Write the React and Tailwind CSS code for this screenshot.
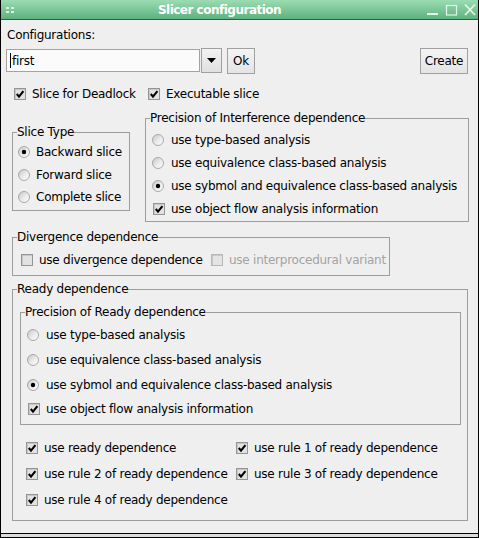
import React from "react";

const Check = ({ checked = true, disabled = false }) => (
  <span
    className={`inline-flex shrink-0 w-[12px] h-[12px] border ${
      disabled ? "border-[#b8b8b8] bg-[#e4e4e4]" : "border-[#959595] bg-[#e2e2e2]"
    } shadow-[inset_1px_1px_0_#c8c8c8]`}
  >
    {checked && (
      <svg viewBox="0 0 10 10" className="w-[10px] h-[10px]">
        <path d="M1.8 5 L4 7.6 L8.4 2.2" stroke="#000" strokeWidth="2.1" fill="none" />
      </svg>
    )}
  </span>
);

const Radio = ({ checked = false }) => (
  <svg viewBox="0 0 12 12" className="w-[12px] h-[12px] shrink-0">
    <defs>
      <linearGradient id="rg" x1="0" y1="0" x2="1" y2="1">
        <stop offset="0" stopColor="#c4c4c4" />
        <stop offset="0.55" stopColor="#ececec" />
        <stop offset="1" stopColor="#ffffff" />
      </linearGradient>
    </defs>
    <circle cx="6" cy="6" r="5.5" fill="url(#rg)" stroke="#a8a8a8" strokeWidth="1" />
    {checked && <circle cx="6" cy="6" r="2.2" fill="#000" />}
  </svg>
);

const RadioRow = ({ checked, children, h = "h-[23px]", gap = "gap-[7px]" }) => (
  <div className={`flex items-center ${h} ${gap}`}>
    <Radio checked={checked} />
    <span>{children}</span>
  </div>
);

const CheckRow = ({ children, h = "h-[23px]", gap = "gap-[6px]", disabled, checked = true, cls = "" }) => (
  <div className={`flex items-center ${h} ${gap} ${cls}`}>
    <Check checked={checked} disabled={disabled} />
    <span className={disabled ? "text-[#a3a3a3]" : ""}>{children}</span>
  </div>
);

const Legend = ({ children }) => (
  <legend className="ml-[4px] px-0 h-[14px] leading-[14px]">{children}</legend>
);

export default function App() {
  return (
    <div className="w-[479px] h-[538px] flex flex-col bg-[#efefef] border-x border-black text-black text-[12px] leading-[14px] tracking-[-0.25px] font-['DejaVu_Sans',sans-serif] overflow-hidden">
      {/* title bar */}
      <div className="h-[20px] shrink-0 flex items-stretch border-b border-[#2f5e40] bg-gradient-to-b from-[#9bdcb2] to-[#5db27f]">
        <div className="w-[20px] flex flex-col gap-[2px] pt-[7px] pl-[5px]">
          <div className="flex gap-[2px]">
            <span className="w-[3px] h-[2px] bg-[#d8f2e1]" />
            <span className="w-[3px] h-[2px] bg-[#d8f2e1]" />
          </div>
          <div className="flex gap-[2px]">
            <span className="w-[3px] h-[2px] bg-[#d8f2e1]" />
            <span className="w-[3px] h-[2px] bg-[#d8f2e1]" />
          </div>
        </div>
        <div className="flex-1 text-center text-white font-bold text-[12px] leading-[21px] tracking-[-0.5px] pr-[4px]">
          Slicer configuration
        </div>
        <div className="w-[56px] flex items-start">
          <svg width="56" height="19" viewBox="0 0 56 19">
            <rect x="5" y="13" width="11" height="2" fill="#e2f6e9" />
            <rect x="24.5" y="5.5" width="10" height="9.5" fill="none" stroke="#e2f6e9" strokeWidth="1.2" />
            <path d="M43 4.5 L53 15 M53 4.5 L43 15" stroke="#e2f6e9" strokeWidth="1.8" />
          </svg>
        </div>
      </div>

      {/* body */}
      <div className="flex-1 flex flex-col pt-[8px]">
        <div className="pl-[6px] h-[14px]">Configurations:</div>

        <div className="mt-[6px] flex items-start pl-[5px] pr-[10px]">
          <div className="mt-[1px] w-[194px] h-[23px] border border-[#a3a3a3] bg-[#fbfbfb] flex items-center pl-[3px]">
            <span className="w-[1px] h-[15px] bg-black mr-[1px]" />
            <span>first</span>
          </div>
          <div className="ml-[1px] w-[21px] h-[25px] border border-[#a0a0a0] bg-gradient-to-b from-[#f2f2f2] to-[#e0e0e0] flex items-center justify-center">
            <svg width="9" height="5" viewBox="0 0 9 5">
              <path d="M0 0 H9 L4.5 5 Z" fill="#000" />
            </svg>
          </div>
          <div className="ml-[5px] w-[28px] h-[26px] border border-[#a0a0a0] bg-gradient-to-b from-[#f4f4f4] to-[#e4e4e4] flex items-center justify-center">
            Ok
          </div>
          <div className="ml-auto w-[48px] h-[26px] border border-[#a0a0a0] bg-gradient-to-b from-[#f4f4f4] to-[#e4e4e4] flex items-center justify-center">
            Create
          </div>
        </div>

        <div className="mt-[13px] flex items-center h-[14px] pl-[13px]">
          <div className="w-[134px] flex items-center gap-[6px]">
            <Check />
            <span>Slice for Deadlock</span>
          </div>
          <div className="flex items-center gap-[6px]">
            <Check />
            <span>Executable slice</span>
          </div>
        </div>

        <div className="mt-[10px] flex items-start pl-[11px]">
          <fieldset className="mt-[14px] w-[118px] border border-[#9d9d9d] p-0 m-0">
            <Legend>Slice Type</Legend>
            <div className="pl-[5px] pt-[2px] pb-[1px]">
              <RadioRow checked gap="gap-[6px]" h="h-[22.5px]">Backward slice</RadioRow>
              <RadioRow gap="gap-[6px]" h="h-[22.5px]">Forward slice</RadioRow>
              <RadioRow gap="gap-[6px]" h="h-[22.5px]">Complete slice</RadioRow>
            </div>
          </fieldset>
          <fieldset className="ml-[15px] w-[324px] border border-[#9d9d9d] p-0 m-0">
            <Legend>Precision of Interference dependence</Legend>
            <div className="pl-[6px] pt-[3px] pb-[1px]">
              <RadioRow>use type-based analysis</RadioRow>
              <RadioRow>use equivalence class-based analysis</RadioRow>
              <RadioRow checked>use sybmol and equivalence class-based analysis</RadioRow>
              <CheckRow cls="pl-[1px]">use object flow analysis information</CheckRow>
            </div>
          </fieldset>
        </div>

        <fieldset className="mt-[8px] ml-[11px] w-[378px] border border-[#9d9d9d] p-0">
          <Legend>Divergence dependence</Legend>
          <div className="flex items-center pl-[8px] pt-[4px] pb-[4px]">
            <CheckRow checked={false} cls="w-[190px]">use divergence dependence</CheckRow>
            <CheckRow checked={false} disabled>use interprocedural variant</CheckRow>
          </div>
        </fieldset>

        <fieldset className="mt-[6px] ml-[11px] w-[456px] border border-[#9d9d9d] p-0">
          <Legend>Ready dependence</Legend>
          <div className="pl-[7px] pr-[6px] pt-[9px] pb-[7px]">
            <fieldset className="border border-[#9d9d9d] p-0">
              <Legend>Precision of Ready dependence</Legend>
              <div className="pl-[6px] pt-[3px] pb-[3px]">
                <RadioRow h="h-[25px]">use type-based analysis</RadioRow>
                <RadioRow h="h-[25px]">use equivalence class-based analysis</RadioRow>
                <RadioRow h="h-[25px]" checked>use sybmol and equivalence class-based analysis</RadioRow>
                <CheckRow h="h-[24px]" cls="pl-[1px]">use object flow analysis information</CheckRow>
              </div>
            </fieldset>
            <div className="mt-[10px] pl-[6px] grid grid-cols-[210px_auto]">
              <CheckRow h="h-[26px]">use ready dependence</CheckRow>
              <CheckRow h="h-[26px]">use rule 1 of ready dependence</CheckRow>
              <CheckRow h="h-[26px]">use rule 2 of ready dependence</CheckRow>
              <CheckRow h="h-[26px]">use rule 3 of ready dependence</CheckRow>
              <CheckRow h="h-[26px]">use rule 4 of ready dependence</CheckRow>
            </div>
          </div>
        </fieldset>
      </div>

      {/* bottom frame */}
      <div className="h-[5px] shrink-0 border-y border-black bg-[#dcdcdc]" />
    </div>
  );
}
